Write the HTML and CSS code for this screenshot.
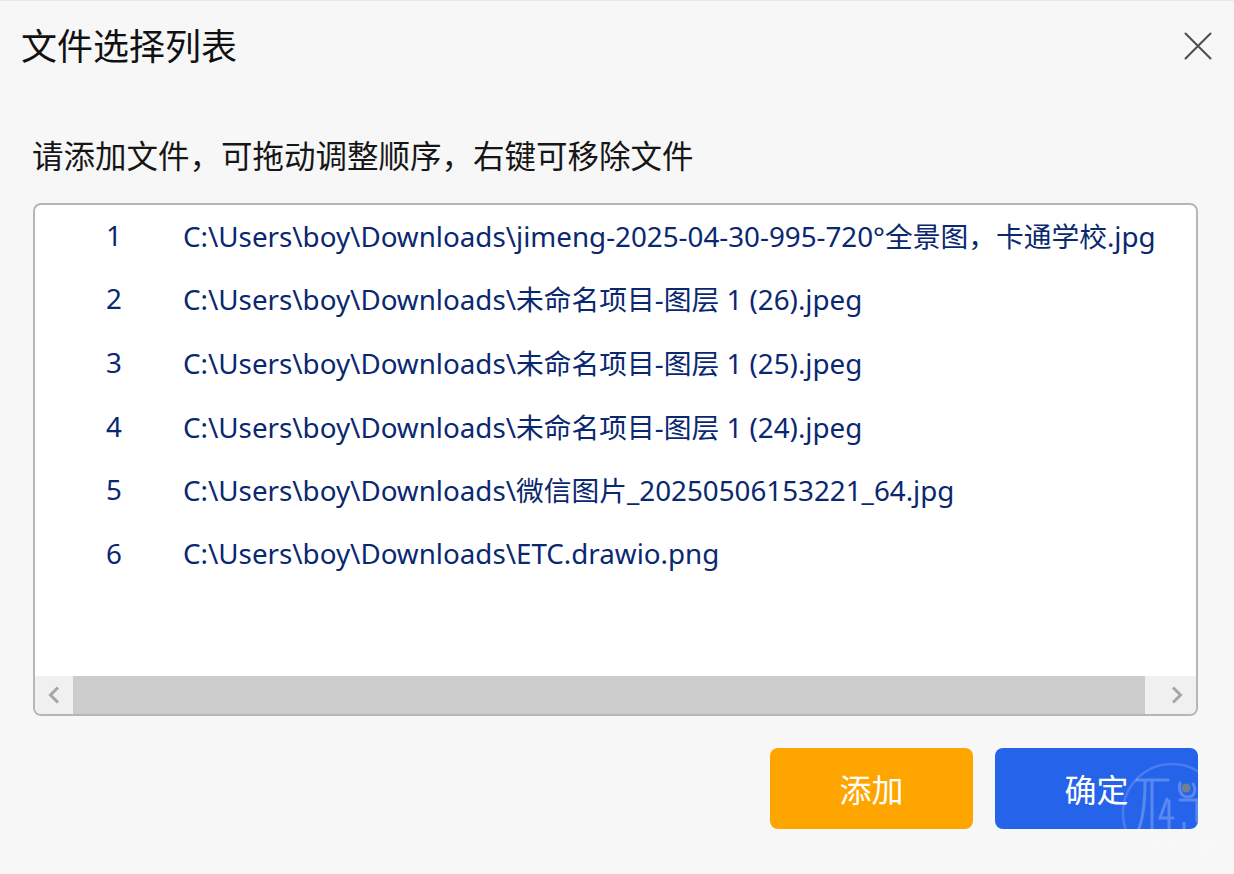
FILE: index.html
```html
<!DOCTYPE html>
<html lang="zh-CN">
<head>
    <meta charset="UTF-8">
    <title>文件选择列表</title>
    <link rel="stylesheet" href="styles.css">
</head>
<body>
    <div class="dialog">
        <div class="header">
            <div class="title">文件选择列表</div>
            <button class="close" aria-label="关闭">
                <svg width="28" height="28" viewBox="0 0 28 28"><path d="M1.500 1.500L26.500 26.500M26.500 1.500L1.500 26.500" fill="none" stroke="#4d4d4d" stroke-width="2" stroke-linecap="round"/></svg>
            </button>
        </div>
        <div class="hint">请添加文件&#65292;可拖动调整顺序&#65292;右键可移除文件</div>
        <div class="list">
            <div class="rows">
                <div class="row"><span class="num">1</span><span class="path">C:\Users\boy\Downloads\jimeng-2025-04-30-995-720°全景图&#65292;卡通学校.jpg</span></div>
                <div class="row"><span class="num">2</span><span class="path">C:\Users\boy\Downloads\未命名项目-图层 1 (26).jpeg</span></div>
                <div class="row"><span class="num">3</span><span class="path">C:\Users\boy\Downloads\未命名项目-图层 1 (25).jpeg</span></div>
                <div class="row"><span class="num">4</span><span class="path">C:\Users\boy\Downloads\未命名项目-图层 1 (24).jpeg</span></div>
                <div class="row"><span class="num">5</span><span class="path">C:\Users\boy\Downloads\微信图片_20250506153221_64.jpg</span></div>
                <div class="row"><span class="num">6</span><span class="path">C:\Users\boy\Downloads\ETC.drawio.png</span></div>
            </div>
            <div class="scrollbar">
                <div class="arrow">
                    <svg width="12" height="18" viewBox="0 0 12 18"><path d="M10 1.500L2.500 9L10 16.500" fill="none" stroke="#a6a6a6" stroke-width="3"/></svg>
                </div>
                <div class="thumb"></div>
                <div class="arrow arrow-right">
                    <svg width="12" height="18" viewBox="0 0 12 18"><path d="M2 1.500L9.500 9L2 16.500" fill="none" stroke="#a6a6a6" stroke-width="3"/></svg>
                </div>
            </div>
        </div>
        <div class="actions">
            <button class="btn btn-add">添加</button>
            <button class="btn btn-ok">确定</button>
        </div>
    </div>

    <svg class="watermark" width="104" height="104" viewBox="0 0 104 104">
        <circle cx="52" cy="53" r="49" fill="none" stroke="#fff" stroke-width="2.500" opacity=".17"/>
        <g fill="none" stroke="#fff" stroke-width="3" stroke-linecap="round" opacity=".24">
            <path d="M17 20H48M25 22C25 43 23 59 18 71"/>
            <path d="M32 22V89"/>
            <path d="M47 39L40 58H53M49 41V71"/>
            <path d="M37 74V84M55 74V84M32 85H58"/>
            <path d="M60 40H77V61"/>
            <path d="M64 63V84C64 87 66 88 70 88H80C84 88 86 85 86 77"/>
            <path d="M60 23C58 31 62 37 68 37C74 37 77 30 73 24"/>
        </g>
        <circle cx="66" cy="28" r="4.500" fill="#8a8a70" opacity=".75"/>
    </svg>
</body>
</html>
```

FILE: styles.css
```css
html, body {
    margin: 0;
    height: 100%;
}

body {
    background-color: #f7f7f7;
    border-top: 1px solid #e8e8e8;
    box-sizing: border-box;
    font-family: "Noto Sans", "Noto Sans CJK SC", sans-serif;
    overflow: hidden;
    position: relative;
}

.dialog {
    padding: 0 36px 0 33px;
}

.header {
    display: flex;
    justify-content: space-between;
    align-items: center;
    height: 92px;
    margin-left: -12px;
    margin-right: -14px;
}

.title {
    font-size: 36px;
    line-height: 92px;
    color: #111;
}

.close {
    background: none;
    border: none;
    padding: 0;
    display: flex;
    margin-bottom: 2px;
}

.hint {
    margin-top: 38px;
    margin-left: -1px;
    font-size: 31.500px;
    line-height: 50px;
    color: #161616;
}

.list {
    margin-top: 22px;
    height: 513px;
    box-sizing: border-box;
    border: 2px solid #b6b6b6;
    border-radius: 8px;
    background-color: #fff;
    display: flex;
    flex-direction: column;
    overflow: hidden;
}

.rows {
    flex: 1;
    overflow: hidden;
}

.row {
    display: flex;
    height: 63.600px;
    box-sizing: border-box;
    padding-bottom: 4px;
    align-items: center;
    font-size: 27.750px;
    color: #0a2870;
    white-space: nowrap;
}

.num {
    width: 158px;
    text-align: center;
    flex-shrink: 0;
    margin-right: -10px;
}

.scrollbar {
    display: flex;
    height: 38px;
    background-color: #f0f0f0;
}

.arrow {
    width: 38px;
    display: flex;
    align-items: center;
    justify-content: center;
}

.arrow-right {
    width: 51px;
    padding-left: 13px;
    box-sizing: border-box;
}

.thumb {
    flex: 1;
    background-color: #cccccc;
}

.actions {
    display: flex;
    justify-content: flex-end;
    gap: 22px;
    margin-top: 32px;
}

.btn {
    width: 203px;
    height: 81px;
    border: none;
    border-radius: 8px;
    color: #fff;
    font-family: inherit;
    font-size: 32px;
    padding: 0 0 2px;
}

.btn-add {
    background-color: #ffa500;
}

.btn-ok {
    background-color: #2563eb;
}

/* logo stamped over the corner of the window */
.watermark {
    position: absolute;
    left: 1120px;
    top: 759px;
}
```
